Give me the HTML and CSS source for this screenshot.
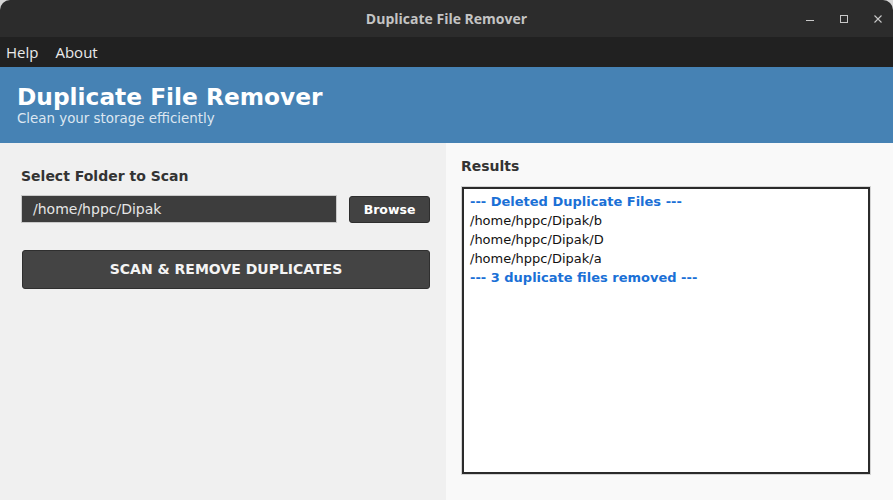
FILE: index.html
```html
<!DOCTYPE html>
<html>
<head>
<meta charset="utf-8">
<link rel="stylesheet" href="styles.css">
</head>
<body>
<div class="window">
  <div class="titlebar">
    <span class="title">Duplicate File Remover</span>
    <div class="controls">
      <svg class="ctl" width="10" height="10" viewBox="0 0 10 10"><line x1="1" y1="6.5" x2="9" y2="6.5" stroke="#c8c8c8" stroke-width="1"/></svg>
      <svg class="ctl" width="10" height="10" viewBox="0 0 10 10"><rect x="1.5" y="1.5" width="7" height="7" fill="none" stroke="#c8c8c8" stroke-width="1"/></svg>
      <svg class="ctl" width="10" height="10" viewBox="0 0 10 10"><path d="M1.5 1.5 L8.5 8.5 M8.5 1.5 L1.5 8.5" stroke="#c8c8c8" stroke-width="1.1"/></svg>
    </div>
  </div>
  <div class="menubar">
    <span class="menu-item">Help</span>
    <span class="menu-item">About</span>
  </div>
  <div class="header">
    <div class="app-title">Duplicate File Remover</div>
    <div class="app-sub">Clean your storage efficiently</div>
  </div>
  <div class="main">
    <div class="left">
      <div class="label">Select Folder to Scan</div>
      <div class="row">
        <div class="entry">/home/hppc/Dipak</div>
        <div class="btn-browse">Browse</div>
      </div>
      <div class="btn-scan">SCAN &amp; REMOVE DUPLICATES</div>
    </div>
    <div class="right">
      <div class="label label-results">Results</div>
      <div class="results-outer">
        <div class="results">
          <div class="line blue">--- Deleted Duplicate Files ---</div>
          <div class="line">/home/hppc/Dipak/b</div>
          <div class="line">/home/hppc/Dipak/D</div>
          <div class="line">/home/hppc/Dipak/a</div>
          <div class="line blue">--- 3 duplicate files removed ---</div>
        </div>
      </div>
    </div>
  </div>
</div>
</body>
</html>
```

FILE: styles.css
```css
html, body {
  margin: 0;
  padding: 0;
  background: #d6d6d6;
}
.window {
  width: 893px;
  height: 500px;
  display: flex;
  flex-direction: column;
  overflow: hidden;
  border-radius: 10px 10px 0 0;
  font-family: "DejaVu Sans", sans-serif;
}
.titlebar {
  height: 37px;
  background: #2c2c2c;
  display: flex;
  align-items: center;
  justify-content: center;
  position: relative;
  flex: none;
}
.title {
  font-family: "Open Sans", sans-serif;
  font-weight: 700;
  font-size: 14px;
  color: #c4c4c4;
}
.controls {
  position: absolute;
  right: 10px;
  top: 14px;
  display: flex;
  gap: 24px;
}
.ctl {
  display: block;
}
.menubar {
  height: 30px;
  background: #212121;
  display: flex;
  align-items: center;
  padding-left: 6px;
  gap: 17px;
  flex: none;
}
.menu-item {
  font-family: "Open Sans", sans-serif;
  font-size: 15px;
  color: #eaeaea;
}
.header {
  height: 76px;
  box-sizing: border-box;
  background: #4682b4;
  padding: 15px 17px 0;
  flex: none;
}
.app-title {
  font-weight: 700;
  font-size: 23.3px;
  line-height: 29px;
  color: #ffffff;
}
.app-sub {
  font-size: 13.4px;
  line-height: 15px;
  color: #dde7f1;
}
.main {
  flex: 1;
  display: flex;
  min-height: 0;
}
.left {
  width: 446px;
  box-sizing: border-box;
  background: #f0f0f0;
  padding: 25px 15px 0 21px;
  flex: none;
}
.label {
  font-weight: 700;
  font-size: 14px;
  line-height: 17px;
  color: #333333;
}
.row {
  display: flex;
  align-items: flex-start;
  gap: 12px;
  margin-top: 10px;
}
.entry {
  width: 316px;
  height: 28px;
  box-sizing: border-box;
  background: #3d3d3d;
  border: 1px solid #c9c9c9;
  color: #e6e6e6;
  font-size: 14px;
  line-height: 26px;
  padding-left: 11px;
}
.btn-browse {
  width: 81px;
  height: 27px;
  margin-top: 1px;
  box-sizing: border-box;
  background: #424242;
  border: 1px solid #2e2e2e;
  border-radius: 3px;
  color: #ffffff;
  font-weight: 700;
  font-size: 12.5px;
  line-height: 25px;
  text-align: center;
}
.btn-scan {
  margin-top: 27px;
  margin-left: 1px;
  width: 408px;
  height: 39px;
  box-sizing: border-box;
  background: #444444;
  border: 1px solid #2f2f2f;
  border-radius: 3px;
  color: #f4f4f4;
  font-weight: 700;
  font-size: 14px;
  line-height: 37px;
  text-align: center;
}
.right {
  flex: 1;
  background: #f9f9f9;
  padding: 15px 22px 25px 15px;
  display: flex;
  flex-direction: column;
  min-width: 0;
}
.results-outer {
  margin-top: 11px;
  flex: 1;
  border: 1px solid #d4d4d4;
  display: flex;
}
.results {
  flex: 1;
  background: #ffffff;
  border: 2px solid #2b2b2b;
  padding: 3px 6px;
}
.line {
  font-size: 13px;
  line-height: 19px;
  color: #111111;
}
.line.blue {
  color: #1a70d6;
  font-weight: 700;
}
```
